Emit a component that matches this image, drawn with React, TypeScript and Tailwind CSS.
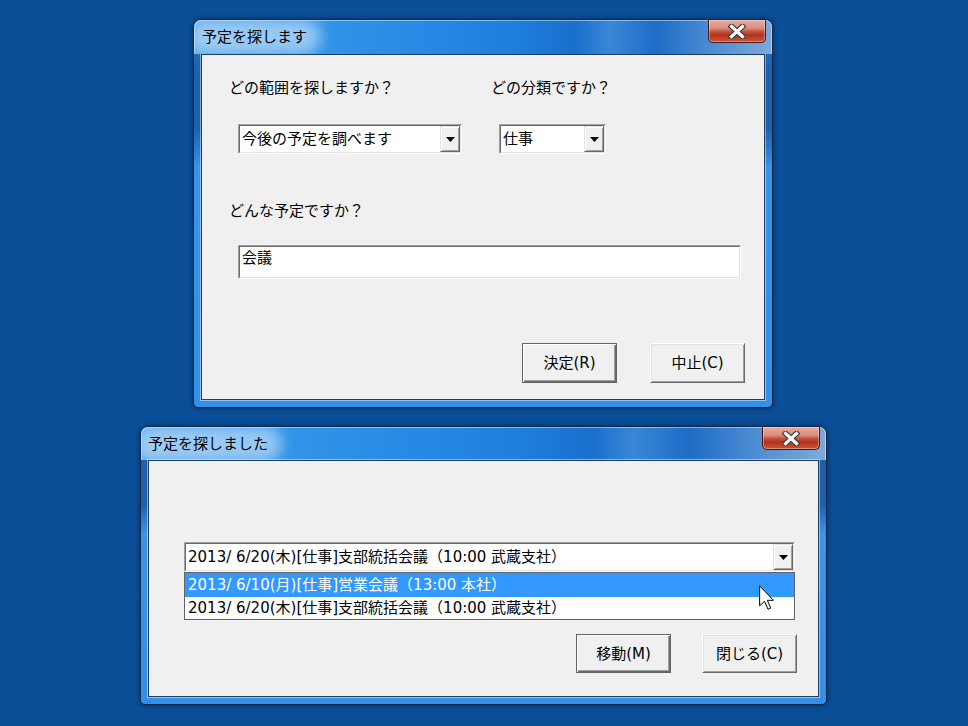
import React from "react";

const FONT = "[font-family:'DejaVu_Sans','Noto_Sans_CJK_JP',sans-serif]";

function CloseButton() {
  return (
    <div className="absolute top-0 right-[6px] w-[58px] h-[23px] rounded-b-[5px] border border-t-0 border-[#4a1810] bg-[linear-gradient(to_bottom,#e7aca0_0%,#d98c7e_38%,#c65a46_50%,#b3321e_68%,#c9553b_100%)] shadow-[inset_0_0_0_1px_rgba(255,255,255,0.35)] flex items-center justify-center">
      <svg width="18" height="15" viewBox="0 0 18 15">
        <path d="M3.5 2.5 L14.5 12.5 M14.5 2.5 L3.5 12.5" stroke="#3c3c3c" strokeWidth="5.6" strokeLinecap="square" fill="none" />
        <path d="M3.5 2.5 L14.5 12.5 M14.5 2.5 L3.5 12.5" stroke="#ffffff" strokeWidth="3.2" strokeLinecap="square" fill="none" />
      </svg>
    </div>
  );
}

function TitleBar({ title, tall }: { title: string; tall: boolean }) {
  return (
    <div
      className={
        tall
          ? "relative overflow-hidden h-[34px] shrink-0 rounded-t-[7px] bg-[linear-gradient(to_right,#4a9fe8_0%,#3395e8_20%,#268ae4_40%,#1f7fdc_55%,#1a6fcc_66%,#3a87d8_72%,#1d6cc6_80%,#4f8ed4_90%,#7eaad9_100%)] shadow-[inset_1px_1px_0_rgba(255,255,255,0.45),inset_-1px_0_0_rgba(255,255,255,0.45)] flex items-center pl-[8px]"
          : "relative overflow-hidden h-[33px] shrink-0 rounded-t-[7px] bg-[linear-gradient(to_right,#4a9fe8_0%,#3395e8_20%,#268ae4_40%,#1f7fdc_55%,#1a6fcc_66%,#3a87d8_72%,#1d6cc6_80%,#4f8ed4_90%,#7eaad9_100%)] shadow-[inset_1px_1px_0_rgba(255,255,255,0.45),inset_-1px_0_0_rgba(255,255,255,0.45)] flex items-center pl-[7px]"
      }
    >
      <div className="relative">
        <div className="absolute -inset-x-[14px] -inset-y-[6px] rounded-full bg-[#d6ebfd] opacity-60 blur-[7px]" />
        <span className="relative text-[15px] leading-[20px] text-black">{title}</span>
      </div>
      <CloseButton />
    </div>
  );
}

function DropButton() {
  return (
    <div className="w-[20px] h-full shrink-0 bg-[#f0f0f0] border border-t-[#e3e3e3] border-l-[#e3e3e3] border-r-[#696969] border-b-[#696969] shadow-[inset_1px_1px_0_#ffffff,inset_-1px_-1px_0_#a0a0a0] flex items-center justify-center">
      <svg width="9" height="5" viewBox="0 0 9 5">
        <polygon points="0,0 9,0 4.5,5" fill="#000" />
      </svg>
    </div>
  );
}

function Sunken({ cls, children }: { cls: string; children: React.ReactNode }) {
  return (
    <div className={cls}>
      <div className="h-full w-full bg-white border border-t-[#696969] border-l-[#696969] border-r-[#e3e3e3] border-b-[#e3e3e3]">
        {children}
      </div>
    </div>
  );
}

function Combo({ cls, text }: { cls: string; text: string }) {
  return (
    <Sunken cls={cls}>
      <div className="flex h-full">
        <div className="flex-1 flex items-center pl-[2px] text-[15px] leading-[20px] text-black whitespace-nowrap overflow-hidden">
          {text}
        </div>
        <DropButton />
      </div>
    </Sunken>
  );
}

function Btn({ label, def, tall }: { label: string; def?: boolean; tall?: boolean }) {
  if (def) {
    return (
      <div className="w-[95px] h-[40px] shrink-0 bg-[#f0f0f0] border border-[#646464] shadow-[inset_1px_1px_0_#ffffff,inset_-1px_-1px_0_#696969,inset_-2px_-2px_0_#a0a0a0] flex items-center justify-center text-[15px] leading-[20px] text-black">
        {label}
      </div>
    );
  }
  return (
    <div
      className={
        tall
          ? "w-[95px] h-[40px] shrink-0 bg-[#f0f0f0] border border-t-[#ffffff] border-l-[#ffffff] border-r-[#696969] border-b-[#696969] shadow-[inset_1px_1px_0_#e3e3e3,inset_-1px_-1px_0_#a0a0a0] flex items-center justify-center text-[15px] leading-[20px] text-black"
          : "w-[95px] h-[39px] shrink-0 bg-[#f0f0f0] border border-t-[#ffffff] border-l-[#ffffff] border-r-[#696969] border-b-[#696969] shadow-[inset_1px_1px_0_#e3e3e3,inset_-1px_-1px_0_#a0a0a0] flex items-center justify-center text-[15px] leading-[20px] text-black"
      }
    >
      {label}
    </div>
  );
}

function DefBtn2({ label }: { label: string }) {
  return (
    <div className="w-[95px] h-[39px] shrink-0 bg-[#f0f0f0] border border-[#646464] shadow-[inset_1px_1px_0_#ffffff,inset_-1px_-1px_0_#696969,inset_-2px_-2px_0_#a0a0a0] flex items-center justify-center text-[15px] leading-[20px] text-black">
      {label}
    </div>
  );
}

const frameBg =
  "bg-[linear-gradient(to_bottom,#2a7ad0_0%,#1d5fa9_14%,#1d60aa_28%,#3a93e6_38%,#3490e6_100%)]";

export default function App() {
  return (
    <div className={`relative w-[968px] h-[726px] overflow-hidden bg-[#0a4e97] ${FONT}`}>
      {/* Dialog 1 */}
      <div className={`absolute left-[193px] top-[19px] w-[580px] h-[389px] rounded-t-[8px] rounded-b-[5px] border border-[#0d2a4e] ${frameBg} shadow-[0_0_5px_rgba(0,0,0,0.45)] flex flex-col`}>
        <TitleBar title="予定を探します" tall />
        <div className="flex-1 mx-[7px] mb-[7px] bg-[#f0f0f0] border border-[#1e3d63] shadow-[0_0_0_1px_rgba(255,255,255,0.45)] pt-[23px] flex flex-col">
          <div className="flex pl-[27px] text-[15px] leading-[20px] text-black">
            <div className="w-[262px]">どの範囲を探しますか？</div>
            <div>どの分類ですか？</div>
          </div>
          <div className="flex pl-[36px] gap-[37px] mt-[26px]">
            <Combo cls="w-[224px] h-[30px] shrink-0 border border-t-[#a0a0a0] border-l-[#a0a0a0] border-r-[#ffffff] border-b-[#ffffff]" text="今後の予定を調べます" />
            <Combo cls="w-[107px] h-[30px] shrink-0 border border-t-[#a0a0a0] border-l-[#a0a0a0] border-r-[#ffffff] border-b-[#ffffff]" text="仕事" />
          </div>
          <div className="pl-[27px] mt-[47px] text-[15px] leading-[20px] text-black">どんな予定ですか？</div>
          <div className="pl-[36px] mt-[24px]">
            <Sunken cls="w-[503px] h-[34px] border border-t-[#a0a0a0] border-l-[#a0a0a0] border-r-[#ffffff] border-b-[#ffffff]">
              <div className="pl-[2px] pt-[1px] text-[15px] leading-[20px] text-black">会議</div>
            </Sunken>
          </div>
          <div className="flex pl-[320px] gap-[33px] mt-[64px]">
            <Btn label="決定(R)" def />
            <Btn label="中止(C)" tall />
          </div>
        </div>
      </div>

      {/* Dialog 2 */}
      <div className={`absolute left-[140px] top-[426px] w-[687px] h-[279px] rounded-t-[8px] rounded-b-[5px] border border-[#0d2a4e] ${frameBg} shadow-[0_0_5px_rgba(0,0,0,0.45)] flex flex-col`}>
        <TitleBar title="予定を探しました" tall={false} />
        <div className="relative flex-1 mx-[7px] mb-[7px] bg-[#f0f0f0] border border-[#1e3d63] shadow-[0_0_0_1px_rgba(255,255,255,0.45)] pt-[81px] flex flex-col">
          <div className="pl-[35px]">
            <Combo cls="w-[611px] h-[30px] border border-t-[#a0a0a0] border-l-[#a0a0a0] border-r-[#ffffff] border-b-[#ffffff]" text="2013/ 6/20(木)[仕事]支部統括会議（10:00 武蔵支社）" />
          </div>
          <div className="flex pl-[427px] gap-[31px] mt-[62px]">
            <DefBtn2 label="移動(M)" />
            <Btn label="閉じる(C)" />
          </div>

          {/* open dropdown list */}
          <div className="absolute left-[35px] top-[111px] w-[611px] h-[48px] bg-white border border-[#646464] flex flex-col">
            <div className="h-[24px] bg-[#3399ff] text-white pl-[3px] flex items-center text-[15px] leading-[20px] whitespace-nowrap">
              2013/ 6/10(月)[仕事]営業会議（13:00 本社）
            </div>
            <div className="h-[22px] text-black pl-[3px] flex items-center text-[15px] leading-[20px] whitespace-nowrap">
              2013/ 6/20(木)[仕事]支部統括会議（10:00 武蔵支社）
            </div>
          </div>

          {/* mouse cursor */}
          <svg className="absolute left-[610px] top-[124px]" width="15" height="26" viewBox="0 0 12 20.5">
            <path d="M0.5 0.5 L0.5 16.5 L4.4 12.9 L7.2 19.3 L9.4 18.3 L6.7 12.1 L11.6 12.1 Z" fill="#ffffff" stroke="#000000" strokeWidth="0.8" strokeLinejoin="miter" />
          </svg>
        </div>
      </div>
    </div>
  );
}
